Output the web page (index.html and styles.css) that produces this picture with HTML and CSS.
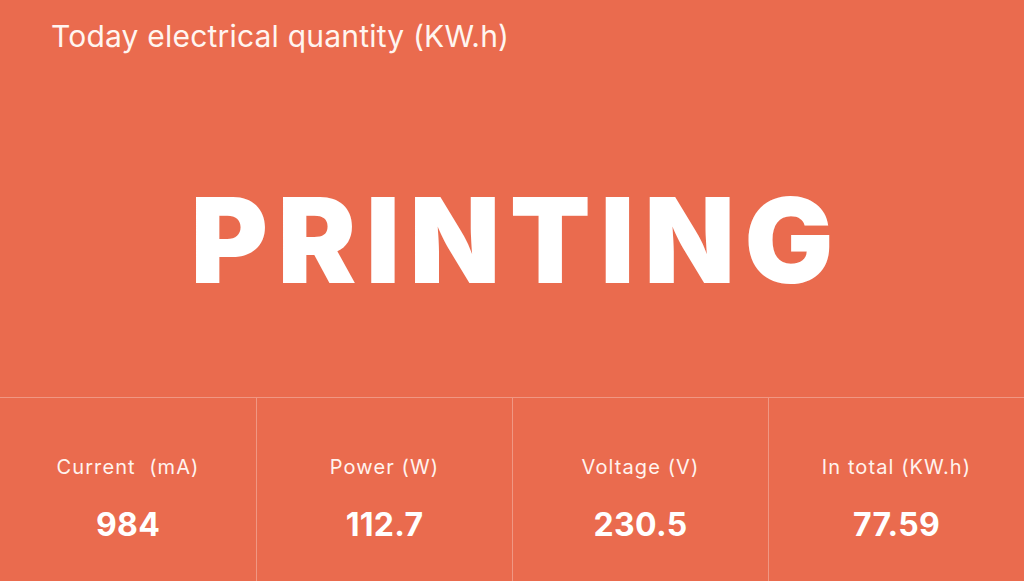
FILE: index.html
```html
<!DOCTYPE html>
<html>
<head>
<meta charset="utf-8">
<link rel="stylesheet" href="styles.css">
</head>
<body>
<div class="screen">
  <section class="top">
    <div class="title">Today electrical quantity (KW.h)</div>
    <div class="status">PRINTING</div>
  </section>
  <section class="stats">
    <div class="cell"><div class="label">Current&nbsp;&nbsp;(mA)</div><div class="value">984</div></div>
    <div class="cell"><div class="label">Power (W)</div><div class="value">112.7</div></div>
    <div class="cell"><div class="label">Voltage (V)</div><div class="value">230.5</div></div>
    <div class="cell"><div class="label">In total (KW.h)</div><div class="value">77.59</div></div>
  </section>
</div>
</body>
</html>
```
FILE: styles.css
```css
html, body { margin: 0; padding: 0; }
body { background: #ea6b4e; font-family: Inter, "Noto Sans", sans-serif; color: #fff; }
.screen { width: 1024px; height: 581px; display: flex; flex-direction: column; overflow: hidden; }
.top { height: 398px; display: flex; flex-direction: column; box-sizing: border-box; padding: 16px 0 0 51px; border-bottom: 1px solid rgba(255,255,255,0.3); }
.title { font-size: 30px; font-weight: 400; line-height: 40px; letter-spacing: 0.2px; color: #fff5f0; }
.status { flex: 1; display: flex; align-items: center; justify-content: center; margin-left: -51px; padding-top: 26px; font-family: Inter, sans-serif; font-weight: 900; font-size: 118px; letter-spacing: 9.5px; text-indent: 9.5px; }
.stats { flex: 1; display: grid; grid-template-columns: repeat(4, 1fr); }
.cell { display: flex; flex-direction: column; align-items: center; padding-top: 57px; border-left: 1px solid rgba(255,255,255,0.3); }
.cell:first-child { border-left: none; }
.label { font-size: 20px; line-height: 24px; letter-spacing: 1.1px; color: #fff3ee; }
.value { font-size: 32px; font-weight: 700; margin-top: 29px; line-height: 34px; letter-spacing: 0.3px; }
```
